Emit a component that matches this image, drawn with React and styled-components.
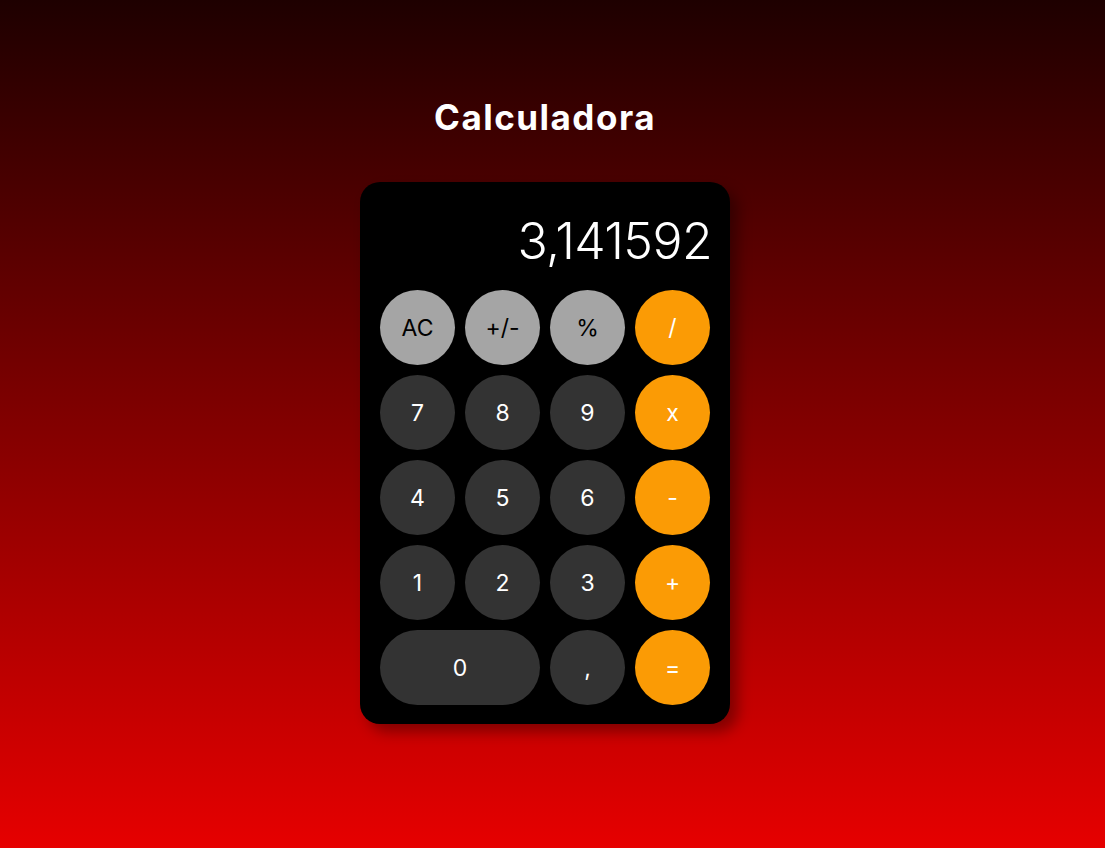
import React from "react";
import styled, { createGlobalStyle } from "styled-components";

const GlobalStyle = createGlobalStyle`
  html, body {
    margin: 0;
    padding: 0;
  }
  body {
    font-family: "Inter", "Noto Sans", sans-serif;
    background: linear-gradient(to bottom, #1e0000 0%, #e60000 100%);
    min-height: 100vh;
  }
`;

const keys = [
  { label: "AC", kind: "light" },
  { label: "+/-", kind: "light" },
  { label: "%", kind: "light" },
  { label: "/", kind: "accent" },
  { label: "7" },
  { label: "8" },
  { label: "9" },
  { label: "x", kind: "accent" },
  { label: "4" },
  { label: "5" },
  { label: "6" },
  { label: "-", kind: "accent" },
  { label: "1" },
  { label: "2" },
  { label: "3" },
  { label: "+", kind: "accent" },
  { label: "0", wide: true },
  { label: "," },
  { label: "=", kind: "accent" },
];

const App = () => {
  return (
    <>
      <GlobalStyle />
      <Page>
        <Title>Calculadora</Title>
        <Calculator>
          <Display>3,141592</Display>
          <Keypad>
            {keys.map((k) => (
              <Key key={k.label} $kind={k.kind} $wide={k.wide}>
                {k.label}
              </Key>
            ))}
          </Keypad>
        </Calculator>
      </Page>
    </>
  );
};

const Page = styled.div`
  min-height: 100vh;
  box-sizing: border-box;
  padding: 96px 15px 0 0;
  display: flex;
  flex-direction: column;
  align-items: center;
`;

const Title = styled.h1`
  margin: 0 0 44px;
  color: #ffffff;
  font-size: 35px;
  font-weight: 700;
  line-height: 42px;
  letter-spacing: 1.5px;
`;

const Calculator = styled.div`
  width: 370px;
  box-sizing: border-box;
  padding: 20px 20px 19px;
  background: #000000;
  border-radius: 20px;
  box-shadow: 8px 8px 14px rgba(0, 0, 0, 0.35);
`;

const Display = styled.div`
  height: 78px;
  margin-bottom: 10px;
  color: #ffffff;
  font-size: 50px;
  font-weight: 300;
  text-align: right;
  line-height: 78px;
  letter-spacing: -0.6px;
  padding-right: 0;
  margin-right: -2px;
`;

const Keypad = styled.div`
  display: grid;
  grid-template-columns: repeat(4, 75px);
  grid-auto-rows: 75px;
  gap: 10px;
`;

const colors = {
  light: { bg: "#a5a5a5", fg: "#000000" },
  accent: { bg: "#fb9b05", fg: "#ffffff" },
  dark: { bg: "#333333", fg: "#ffffff" },
};

const Key = styled.button`
  grid-column: ${(p) => (p.$wide ? "span 2" : "auto")};
  border: none;
  border-radius: 38px;
  padding: 0;
  background: ${(p) => colors[p.$kind || "dark"].bg};
  color: ${(p) => colors[p.$kind || "dark"].fg};
  font-family: inherit;
  font-size: 23px;
  font-weight: 400;
  cursor: pointer;
`;

export default App;
